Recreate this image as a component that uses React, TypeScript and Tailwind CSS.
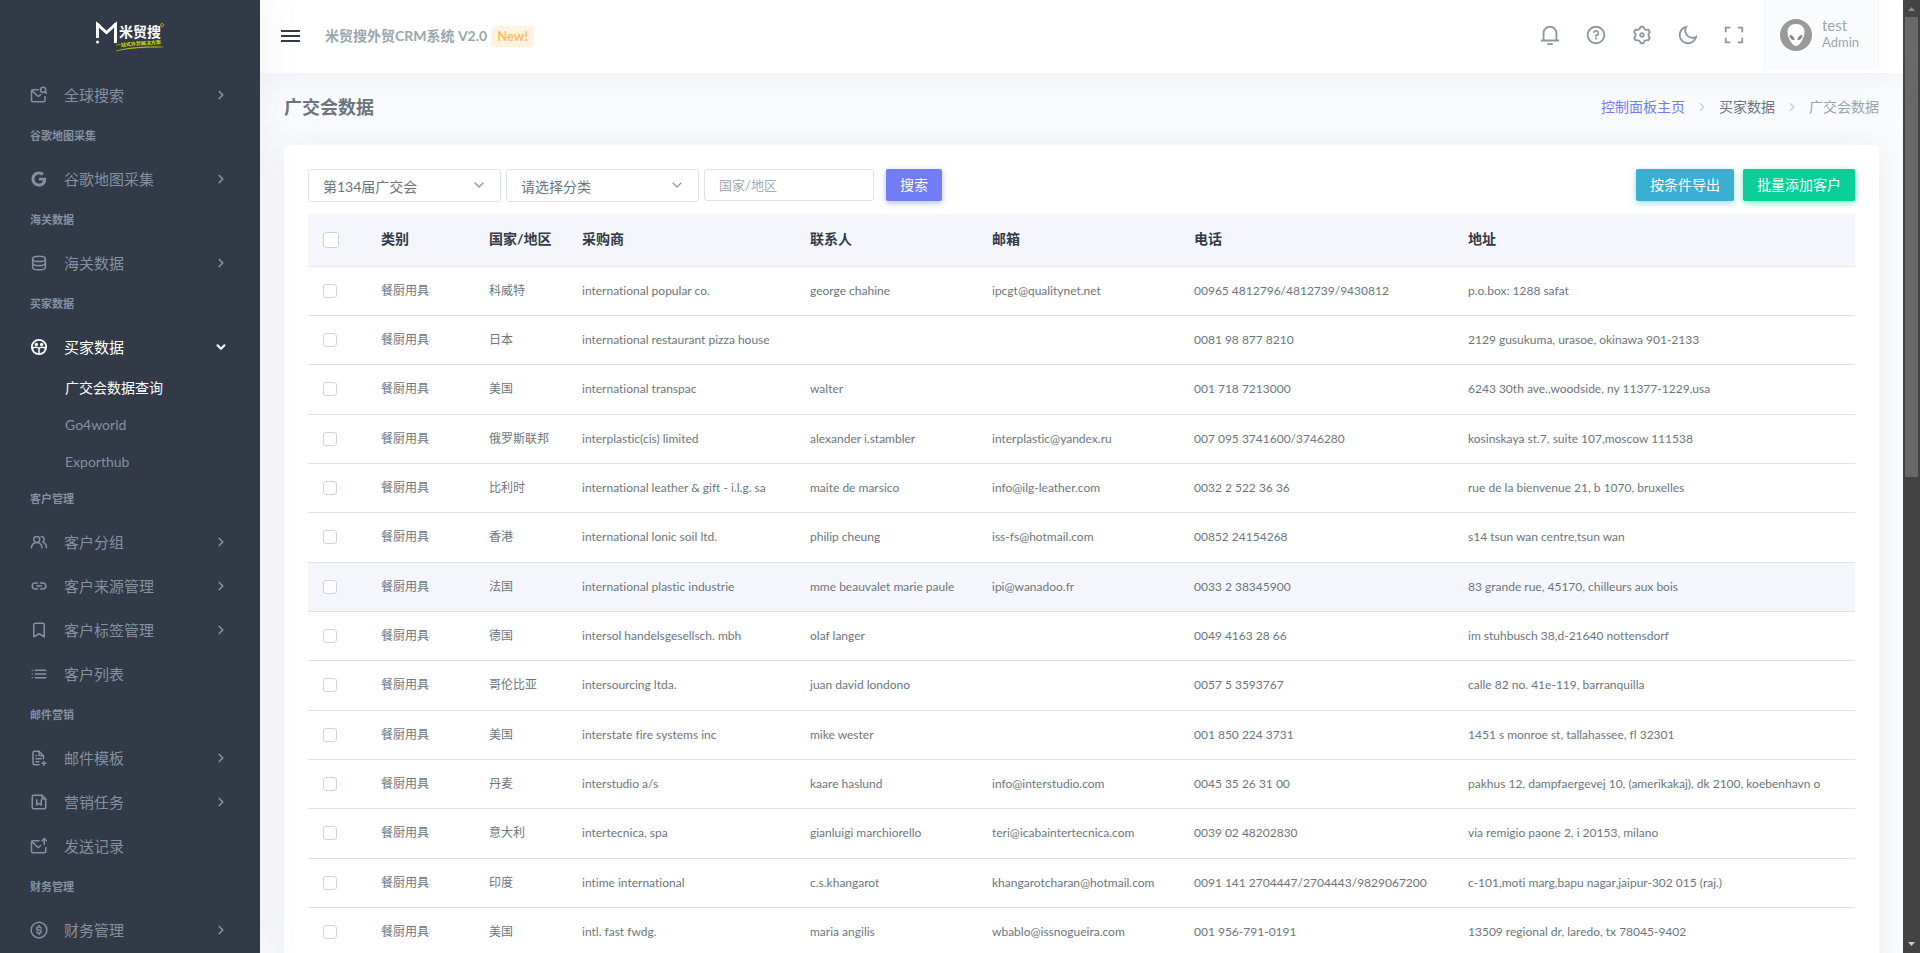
import type { ReactNode } from "react";
import {
  RiFullscreenLine,
  RiMoonLine,
  RiNotification3Line,
  RiQuestionLine,
  RiSettings3Line,
} from "react-icons/ri";
import { ChevronDown, ChevronRight } from "lucide-react";

const Glyph = ({ children }: { children: ReactNode }) => (
  <svg
    viewBox="0 0 24 24"
    className="size-[18px] shrink-0"
    fill="none"
    stroke="currentColor"
    strokeWidth="2"
    strokeLinecap="round"
    strokeLinejoin="round"
    aria-hidden="true"
  >
    {children}
  </svg>
);

const icons: Record<string, ReactNode> = {
  mailSearch: (
    <Glyph>
      <path d="M11 5H4a2 2 0 0 0-2 2v12a2 2 0 0 0 2 2h14a2 2 0 0 0 2-2v-5" />
      <path d="m3 6.500 6.600 6.600a2 2 0 0 0 2.800 0l1.800-1.800" />
      <circle cx="17.500" cy="5" r="3.500" />
      <path d="m20 7.500 2 2" />
    </Glyph>
  ),
  google: (
    <Glyph>
      <path
        fill="currentColor"
        stroke="none"
        d="M11.99,13.9v-3.72h9.36c.14.63.25,1.22.25,2.05,0,5.71-3.83,9.77-9.6,9.77-5.52,0-10-4.48-10-10S6.48,2,12,2c2.7,0,4.96.99,6.69,2.61l-2.84,2.76c-.72-.68-1.98-1.48-3.85-1.48-3.31,0-6.01,2.75-6.01,6.12s2.7,6.12,6.01,6.12c3.83,0,5.24-2.65,5.5-4.22h-5.51Z"
      />
    </Glyph>
  ),
  database: (
    <Glyph>
      <ellipse cx="12" cy="6.500" rx="8.500" ry="3.500" />
      <path d="M3.500 6.500v11c0 2 3.800 3.500 8.500 3.500s8.500-1.500 8.500-3.500v-11" />
      <path d="M3.500 12c0 2 3.800 3.500 8.500 3.500s8.500-1.500 8.500-3.500" />
    </Glyph>
  ),
  buyers: (
    <Glyph>
      <circle cx="12" cy="12" r="9.500" strokeWidth="2.500" />
      <circle cx="8.500" cy="8.500" r="2.200" fill="currentColor" stroke="none" />
      <circle cx="15.500" cy="8.500" r="2.200" fill="currentColor" stroke="none" />
      <path d="M3.500 13.500c2.500-1.500 6-1.500 8.500 0 2.500-1.500 6-1.500 8.500 0M12 13.500V20" />
    </Glyph>
  ),
  users: (
    <Glyph>
      <path
        fill="currentColor"
        stroke="none"
        d="M12.3,12.22A4.92,4.92,0,0,0,14,8.5a5,5,0,0,0-10,0,4.92,4.92,0,0,0,1.7,3.72A8,8,0,0,0,1,19.5a1,1,0,0,0,2,0,6,6,0,0,1,12,0,1,1,0,0,0,2,0A8,8,0,0,0,12.3,12.22ZM9,11.5a3,3,0,1,1,3-3A3,3,0,0,1,9,11.5Zm9.74.32A5,5,0,0,0,15,3.5a1,1,0,0,0,0,2,3,3,0,0,1,3,3,3,3,0,0,1-1.5,2.59,1,1,0,0,0-.5.84,1,1,0,0,0,.45.86l.39.26.13.07a7,7,0,0,1,4,6.38,1,1,0,0,0,2,0A9,9,0,0,0,18.74,11.82Z"
      />
    </Glyph>
  ),
  link: (
    <Glyph>
      <path d="M10 8H7a4 4 0 0 0 0 8h3M14 8h3a4 4 0 0 1 0 8h-3M9 12h6" />
    </Glyph>
  ),
  bookmark: (
    <Glyph>
      <path d="M7 3h10a2 2 0 0 1 2 2v16l-7-4-7 4V5a2 2 0 0 1 2-2Z" />
    </Glyph>
  ),
  list: (
    <Glyph>
      <path d="M7 7h14M7 12h14M7 17h14M3 7h0M3 12h0M3 17h0" />
    </Glyph>
  ),
  filePlus: (
    <Glyph>
      <path d="M12 21H6a2 2 0 0 1-2-2V5a2 2 0 0 1 2-2h6l6 6v4" />
      <path d="M12 3v4a2 2 0 0 0 2 2h4M8 9h1M8 13h7M8 17h4M16 19h5M18.500 16.500v5" />
    </Glyph>
  ),
  fileMark: (
    <Glyph>
      <path d="M3 5a2 2 0 0 1 2-2h11l5 5v11a2 2 0 0 1-2 2H5a2 2 0 0 1-2-2Z" />
      <path d="M16 3v3a2 2 0 0 0 2 2h3M9 9v7l3-2 3 2V9" />
    </Glyph>
  ),
  mailUp: (
    <Glyph>
      <path d="M12 5H4a2 2 0 0 0-2 2v12a2 2 0 0 0 2 2h15a2 2 0 0 0 2-2v-5" />
      <path d="m3 6.500 6.600 6.600a2 2 0 0 0 2.800 0l1.800-1.800M19 10V2.500M16 5l3-3 3 3" />
    </Glyph>
  ),
  dollar: (
    <Glyph>
      <circle cx="12" cy="12" r="10.500" />
      <path d="M15 9.500a2 2 0 0 0-2-1.500h-2a2 2 0 0 0 0 4h2a2 2 0 0 1 0 4h-2a2 2 0 0 1-2-1.500M12 6v2M12 16v2" />
    </Glyph>
  ),
};

type MenuItem = { icon: string; label: string; arrow?: boolean; children?: string[] };

const menu: { title?: string; items: MenuItem[] }[] = [
  { items: [{ icon: "mailSearch", label: "全球搜索", arrow: true }] },
  { title: "谷歌地图采集", items: [{ icon: "google", label: "谷歌地图采集", arrow: true }] },
  { title: "海关数据", items: [{ icon: "database", label: "海关数据", arrow: true }] },
  {
    title: "买家数据",
    items: [
      {
        icon: "buyers",
        label: "买家数据",
        arrow: true,
        children: ["广交会数据查询", "Go4world", "Exporthub"],
      },
    ],
  },
  {
    title: "客户管理",
    items: [
      { icon: "users", label: "客户分组", arrow: true },
      { icon: "link", label: "客户来源管理", arrow: true },
      { icon: "bookmark", label: "客户标签管理", arrow: true },
      { icon: "list", label: "客户列表" },
    ],
  },
  {
    title: "邮件营销",
    items: [
      { icon: "filePlus", label: "邮件模板", arrow: true },
      { icon: "fileMark", label: "营销任务", arrow: true },
      { icon: "mailUp", label: "发送记录" },
    ],
  },
  { title: "财务管理", items: [{ icon: "dollar", label: "财务管理", arrow: true }] },
];

const columns = [
  { name: "类别", width: "w-[108px]" },
  { name: "国家/地区", width: "w-[93px]" },
  { name: "采购商", width: "w-[228px]" },
  { name: "联系人", width: "w-[182px]" },
  { name: "邮箱", width: "w-[202px]" },
  { name: "电话", width: "w-[274px]" },
  { name: "地址", width: "" },
];

const rows = [
  ["科威特", "international popular co.", "george chahine", "ipcgt@qualitynet.net", "00965 4812796/4812739/9430812", "p.o.box: 1288 safat"],
  ["日本", "international restaurant pizza house", "", "", "0081 98 877 8210", "2129 gusukuma, urasoe, okinawa 901-2133"],
  ["美国", "international transpac", "walter", "", "001 718 7213000", "6243 30th ave.,woodside, ny 11377-1229,usa"],
  ["俄罗斯联邦", "interplastic(cis) limited", "alexander i.stambler", "interplastic@yandex.ru", "007 095 3741600/3746280", "kosinskaya st.7, suite 107,moscow 111538"],
  ["比利时", "international leather & gift - i.l.g. sa", "maite de marsico", "info@ilg-leather.com", "0032 2 522 36 36", "rue de la bienvenue 21, b 1070, bruxelles"],
  ["香港", "international lonic soil ltd.", "philip cheung", "iss-fs@hotmail.com", "00852 24154268", "s14 tsun wan centre,tsun wan"],
  ["法国", "international plastic industrie", "mme beauvalet marie paule", "ipi@wanadoo.fr", "0033 2 38345900", "83 grande rue, 45170, chilleurs aux bois"],
  ["德国", "intersol handelsgesellsch. mbh", "olaf langer", "", "0049 4163 28 66", "im stuhbusch 38,d-21640 nottensdorf"],
  ["哥伦比亚", "intersourcing ltda.", "juan david londono", "", "0057 5 3593767", "calle 82 no. 41e-119, barranquilla"],
  ["美国", "interstate fire systems inc", "mike wester", "", "001 850 224 3731", "1451 s monroe st, tallahassee, fl 32301"],
  ["丹麦", "interstudio a/s", "kaare haslund", "info@interstudio.com", "0045 35 26 31 00", "pakhus 12, dampfaergevej 10, (amerikakaj), dk 2100, koebenhavn o"],
  ["意大利", "intertecnica, spa", "gianluigi marchiorello", "teri@icabaintertecnica.com", "0039 02 48202830", "via remigio paone 2, i 20153, milano"],
  ["印度", "intime international", "c.s.khangarot", "khangarotcharan@hotmail.com", "0091 141 2704447/2704443/9829067200", "c-101,moti marg,bapu nagar,jaipur-302 015 (raj.)"],
  ["美国", "intl. fast fwdg.", "maria angilis", "wbablo@issnogueira.com", "001 956-791-0191", "13509 regional dr, laredo, tx 78045-9402"],
];

const Logo = () => (
  <a href="#" aria-label="米贸搜" className="flex h-[73px] shrink-0 justify-center pt-5">
    <svg viewBox="0 0 70 34" className="h-[34px] w-[70px]">
      <path d="M2.500 18V4.500L11.500 12.500L20.500 4.500V23" fill="none" stroke="#fff" strokeWidth="3" />
      <path d="M1 4.500V3h2.500l3 3H1ZM22 4.500V3h-2.500l-3 3H22Z" fill="#fff" />
      <circle cx="2.500" cy="22" r="1.500" fill="#fff" />
      <text x="24" y="17" fontSize="14" fontWeight="700" fill="#fff">米贸搜</text>
      <circle cx="67" cy="5" r="1.500" fill="none" stroke="#9aa61e" />
      <text x="21" y="27" fontSize="5" fontWeight="700" fill="#d3dc0a" transform="rotate(-4 21 27)">一站式外贸解决方案</text>
      <path d="M21 31C32 27.500 50 26 68 27C50 27.300 34 28 21 31Z" fill="#d3dc0a" stroke="#d3dc0a" strokeWidth=".3" />
    </svg>
  </a>
);

const Sidebar = () => (
  <aside className="relative z-10 flex w-[260px] shrink-0 flex-col overflow-hidden bg-[#313a46] text-[#8391a2] shadow-[0_0_35px_rgba(154,161,171,0.15)]">
    <Logo />
    <nav>
      {menu.map((group, i) => (
        <div key={i}>
          {group.title && (
            <h6 className="h-10 px-[30px] pt-2.5 text-[11px] leading-[18px] font-bold">{group.title}</h6>
          )}
          {group.items.map((item) => (
            <div key={item.label}>
              <a
                href="#"
                className={`flex h-11 items-center pr-8 pl-[30px] text-[15px] ${item.children ? "text-white" : ""}`}
              >
                {icons[item.icon]}
                <span className="ml-4 flex-1">{item.label}</span>
                {item.arrow &&
                  (item.children ? (
                    <ChevronDown className="size-3.5" strokeWidth={3.5} />
                  ) : (
                    <ChevronRight className="size-3.5" strokeWidth={3} />
                  ))}
              </a>
              {item.children?.map((child, n) => (
                <a
                  key={child}
                  href="#"
                  className={`flex h-[37px] items-center pl-[65px] text-sm ${n === 0 ? "text-white" : ""}`}
                >
                  {child}
                </a>
              ))}
            </div>
          ))}
        </div>
      ))}
    </nav>
  </aside>
);

const Topbar = () => (
  <header className="relative flex h-[73px] shrink-0 items-start bg-white pr-6 pl-[21px] text-[#98a6ad] shadow-[0_0_35px_rgba(154,161,171,0.15)]">
    <button type="button" aria-label="菜单" className="flex h-[72px] w-[19px] flex-col justify-center gap-[3px]">
      <span className="h-0.5 w-full bg-[#313a46]" />
      <span className="h-0.5 w-full bg-[#313a46]" />
      <span className="h-0.5 w-full bg-[#313a46]" />
    </button>
    <div className="ml-[25px] flex h-[72px] items-center text-sm font-bold">
      <span>米贸搜外贸CRM系统 V2.0</span>
      <span className="ml-1 rounded bg-[#fff3e0] px-1.5 text-[13px] leading-[21px] text-[#ffbc5a]">New!</span>
    </div>
    <div className="ml-auto flex h-[70px] items-center gap-6 pr-[19px] text-[22px] text-[#8c98a0]">
      <button type="button" aria-label="通知"><RiNotification3Line /></button>
      <button type="button" aria-label="帮助"><RiQuestionLine /></button>
      <button type="button" aria-label="设置"><RiSettings3Line /></button>
      <button type="button" aria-label="夜间模式"><RiMoonLine /></button>
      <button type="button" aria-label="全屏"><RiFullscreenLine /></button>
    </div>
    <a href="#" className="flex h-[70px] w-[115px] items-center border-x border-[#f1f3fa] bg-[#fafbfd] pl-[15px]">
      <svg viewBox="0 0 32 32" className="size-8" aria-hidden="true">
        <circle cx="16" cy="16" r="16" fill="#999" />
        <path d="M16 5C10.500 5 7.500 8.500 7.500 13c0 6 5 14 8.500 14s8.500-8 8.500-14c0-4.500-3-8-8.500-8Z" fill="#fff" />
        <path d="M9.500 16c3 0 5 2 5.200 5-3.200.2-5.200-2-5.200-5ZM22.500 16c-3 0-5 2-5.200 5 3.200.2 5.200-2 5.200-5Z" fill="#888" />
      </svg>
      <span className="ml-2.5 flex flex-col pb-1">
        <span className="text-[15px] leading-[18px]">test</span>
        <span className="text-[13px] leading-4">Admin</span>
      </span>
    </a>
  </header>
);

const Picker = ({ label, value }: { label: string; value: string }) => (
  <div className="relative w-[193px]">
    <select
      aria-label={label}
      className="h-[33px] w-full appearance-none rounded-[3px] border border-[#dee2e6] bg-white px-3.5 pt-0.5 text-sm text-[#6c757d]"
    >
      <option>{value}</option>
    </select>
    <ChevronDown className="pointer-events-none absolute top-2 right-3.5 size-4 text-[#8c98a0]" strokeWidth={2} />
  </div>
);

const box = "block appearance-none rounded-[3px] border border-[#ced4da] bg-white";

const BuyerTable = () => (
  <table className="mt-3 w-full table-fixed text-left">
    <thead>
      <tr className="h-[52px] border-b border-[#e6e9ee] bg-[#f5f6fb] text-sm text-[#313a46]">
        <th className="w-[58px] pl-[15px]">
          <input type="checkbox" aria-label="全选" className={`size-4 ${box}`} />
        </th>
        {columns.map((col) => (
          <th key={col.name} className={`pb-0.5 pl-[15px] font-bold ${col.width}`}>{col.name}</th>
        ))}
      </tr>
    </thead>
    <tbody>
      {rows.map((row, i) => (
        <tr
          key={i}
          className={`h-[49px] border-b border-[#dee2e6] text-xs whitespace-nowrap text-[#6c757d] nth-[3n]:h-[50px] ${i === 6 ? "bg-[#f5f6fb]" : ""}`}
        >
          <td className="pl-[15px]">
            <input type="checkbox" aria-label={row[1]} className={`size-3.5 ${box}`} />
          </td>
          <td className="pl-[15px]">餐厨用具</td>
          {row.map((cell, n) => (
            <td key={n} className="pl-[15px]">{cell}</td>
          ))}
        </tr>
      ))}
    </tbody>
  </table>
);

const Scrollbar = () => (
  <div className="flex w-[17px] shrink-0 flex-col items-center bg-[#424242]" aria-hidden="true">
    <svg viewBox="0 0 17 17" className="size-[17px] shrink-0"><path d="M5 11h7L8.500 7Z" fill="#8b8b8b" /></svg>
    <div className="w-[13px] grow bg-[#686868]" />
    <div className="grow" />
    <svg viewBox="0 0 17 17" className="size-[17px] shrink-0"><path d="M5 6h7l-3.500 4Z" fill="#cdcdcd" /></svg>
  </div>
);

export default function App() {
  return (
    <div className="flex h-screen overflow-hidden bg-[#fafbfe] font-[Lato,'Noto_Sans_CJK_SC',sans-serif] [font-variant-ligatures:none]">
      <Sidebar />
      <div className="flex min-w-0 flex-1 flex-col">
        <Topbar />
        <main className="px-6">
          <div className="flex h-[72px] items-center justify-between pb-1">
            <h4 className="text-lg font-bold text-[#6c757d]">广交会数据</h4>
            <nav className="flex items-center gap-2.5 text-sm text-[#98a6ad]">
              <a href="#" className="text-[#727cf5]">控制面板主页</a>
              <ChevronRight className="size-3.5 text-[#c8d0d6]" />
              <a href="#" className="text-[#6c757d]">买家数据</a>
              <ChevronRight className="size-3.5 text-[#c8d0d6]" />
              <span>广交会数据</span>
            </nav>
          </div>
          <section className="rounded bg-white p-6 shadow-[0_0_35px_rgba(154,161,171,0.15)]">
            <form className="flex items-start text-sm text-white">
              <div className="flex items-start gap-[5px]">
                <Picker label="届次" value="第134届广交会" />
                <Picker label="分类" value="请选择分类" />
                <input
                  type="text"
                  aria-label="国家/地区"
                  placeholder="国家/地区"
                  className="h-8 w-[170px] rounded-[3px] border border-[#dee2e6] px-3.5 text-[13px] text-[#6c757d] placeholder:text-[#a1aab3]"
                />
              </div>
              <button type="button" className="ml-3 h-8 rounded-[2px] bg-[#727cf5] px-3.5 shadow-[0_2px_6px_rgba(114,124,245,0.5)]">搜索</button>
              <button type="button" className="ml-auto h-8 rounded-[2px] bg-[#39afd1] px-3.5 shadow-[0_2px_6px_rgba(57,175,209,0.5)]">按条件导出</button>
              <button type="button" className="ml-[9px] h-8 rounded-[2px] bg-[#0acf97] px-3.5 shadow-[0_2px_6px_rgba(10,207,151,0.5)]">批量添加客户</button>
            </form>
            <BuyerTable />
          </section>
        </main>
      </div>
      <Scrollbar />
    </div>
  );
}
